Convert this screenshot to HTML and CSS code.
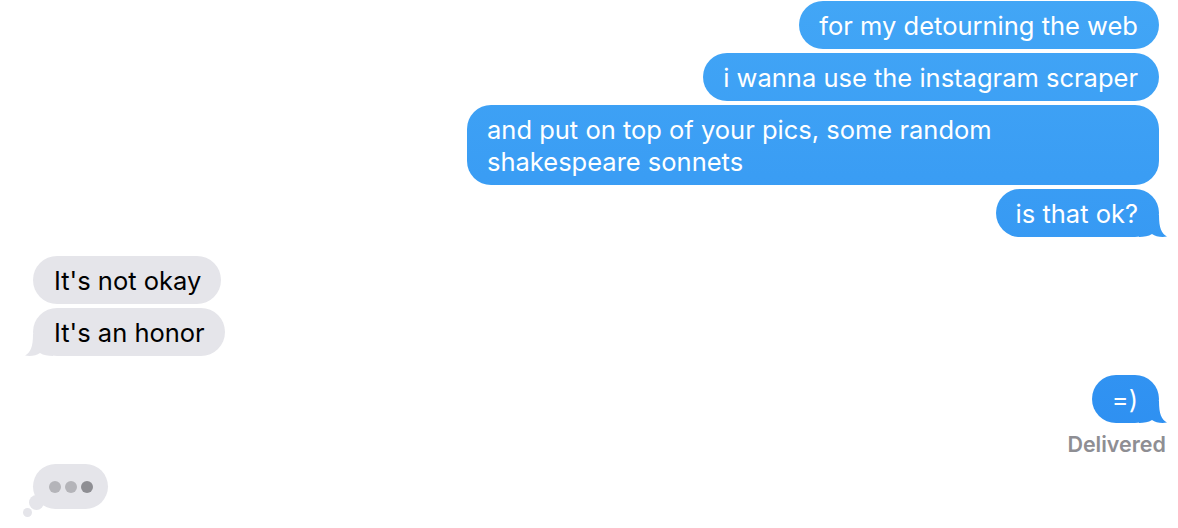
FILE: index.html
```html
<!DOCTYPE html>
<html lang="en">
<head>
<meta charset="utf-8">
<title>Messages</title>
<link rel="stylesheet" href="styles.css">
</head>
<body>
<main class="thread">
  <section class="group out">
    <div class="bubble">for my detourning the web</div>
    <div class="bubble">i wanna use the instagram scraper</div>
    <div class="bubble wide">and put on top of your pics, some random<br>shakespeare sonnets</div>
    <div class="bubble tail">is that ok?</div>
  </section>
  <section class="group in">
    <div class="bubble">It's not okay</div>
    <div class="bubble tail">It's an honor</div>
  </section>
  <section class="group out">
    <div class="bubble tail">=)</div>
    <div class="status">Delivered</div>
  </section>
  <section class="typing">
    <span class="puff big"></span>
    <span class="puff small"></span>
    <div class="typing-bubble">
      <span class="dot"></span><span class="dot"></span><span class="dot dark"></span>
    </div>
  </section>
</main>
</body>
</html>
```

FILE: styles.css
```css
* { box-sizing: border-box; }
html, body {
  margin: 0;
  background: #ffffff;
}
body {
  font-family: Inter, "Noto Sans", sans-serif;
  font-size: 25.5px;
  -webkit-font-smoothing: antialiased;
}
.thread {
  display: flex;
  flex-direction: column;
  padding: 1px 19px 0 33px;
}
.group {
  display: flex;
  flex-direction: column;
  gap: 4px;
}
.group + .group { margin-top: 19px; }
.group.out { align-items: flex-end; }
.group.in { align-items: flex-start; }

.bubble {
  position: relative;
  max-width: 692px;
  padding: 9px 21px 7px 20px;
  line-height: 32px;
  border-radius: 24px;
}
.bubble.wide { width: 692px; }

.out .bubble {
  color: #ffffff;
  background: linear-gradient(180deg, #42a6f6 0%, #2a8bf0 100%) fixed;
}
.in .bubble {
  color: #000000;
  background: #e5e5ea;
  padding: 9px 20px 7px 21px;
}

.bubble.tail::after {
  content: "";
  position: absolute;
  bottom: 0;
  width: 28px;
  height: 22px;
}
.out .bubble.tail::after {
  right: -8px;
  background: linear-gradient(180deg, #42a6f6 0%, #2a8bf0 100%) fixed;
  clip-path: path("M0 0 L20 0 C20 13 22.5 18.5 28 21.6 C22 22.6 16.5 21.5 13 19 C9.5 21.2 5 22 0 22 Z");
}
.in .bubble.tail::after {
  left: -8px;
  background: #e5e5ea;
  clip-path: path("M28 0 L8 0 C8 13 5.5 18.5 0 21.6 C6 22.6 11.5 21.5 15 19 C18.5 21.2 23 22 28 22 Z");
}

.status {
  margin-top: 3px;
  margin-right: -7px;
  font-size: 21.5px;
  line-height: 28px;
  font-weight: 600;
  color: #8e8e93;
}

.typing {
  position: relative;
  margin-top: 6px;
  height: 64px;
}
.typing-bubble {
  display: flex;
  align-items: center;
  gap: 4px;
  width: 75px;
  height: 45px;
  padding-left: 16px;
  border-radius: 23px;
  background: #e5e5ea;
}
.dot {
  width: 12px;
  height: 12px;
  border-radius: 50%;
  background: #b4b4b9;
}
.dot.dark { background: #8e8e93; }
.puff {
  position: absolute;
  border-radius: 50%;
  background: #e5e5ea;
}
.puff.big {
  left: -4px;
  top: 31px;
  width: 15px;
  height: 15px;
}
.puff.small {
  left: -10px;
  top: 44px;
  width: 9px;
  height: 9px;
}
```
